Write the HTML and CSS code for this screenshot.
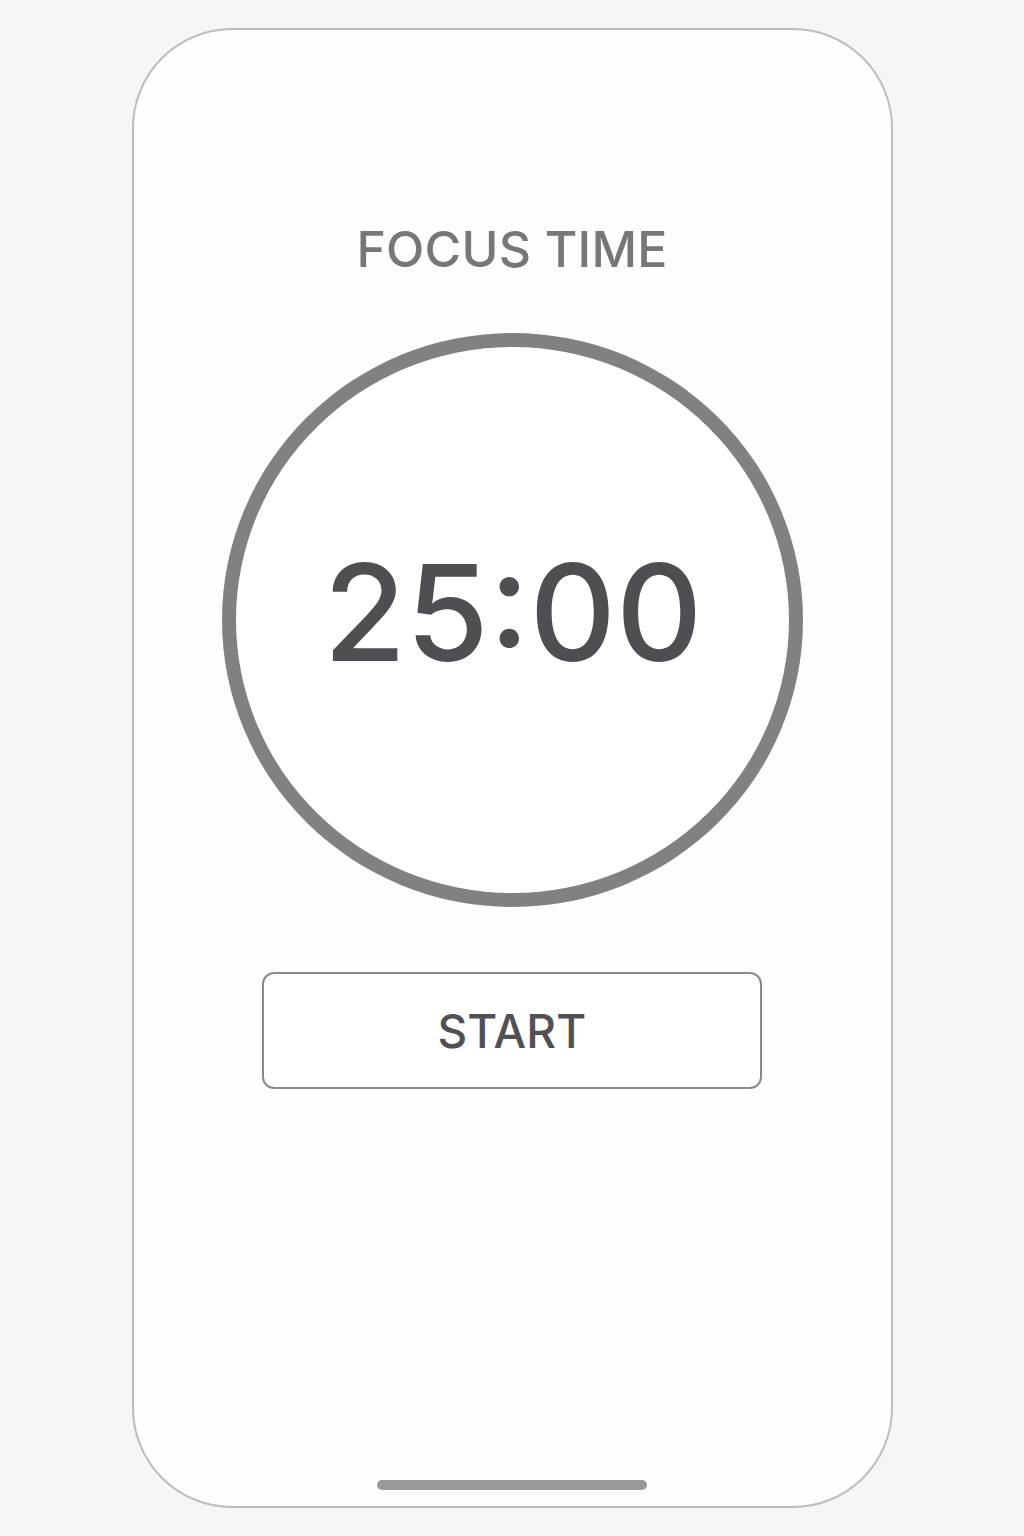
FILE: index.html
```html
<!DOCTYPE html>
<html lang="en">
<head>
    <meta charset="UTF-8">
    <meta name="viewport" content="width=device-width, initial-scale=1.0">
    <title>Focus Timer</title>

    <link rel="stylesheet" href="styles.css">
</head>
<body>
    <div class="phone">
        <h1 class="title">FOCUS TIME</h1>

        <div class="dial">
            <span class="time">25:00</span>
        </div>

        <button class="start-button">START</button>

        <div class="home-bar"></div>
    </div>
</body>
</html>
```

FILE: styles.css
```css
/* Page */
body {
    font-family: Inter, "Noto Sans", sans-serif;
    background-color: #f6f6f6;
    margin: 0;
    padding: 0;
}

/* Phone frame */
.phone {
    box-sizing: border-box;
    width: 761px;
    height: 1480px;
    margin: 28px auto 0;
    padding: 194px 0 16px;
    background-color: #fdfdfd;
    border: 2px solid #bdbdbd;
    border-radius: 100px;
    display: flex;
    flex-direction: column;
    align-items: center;
}

/* Heading */
.title {
    margin: 0;
    font-size: 50px;
    line-height: 1;
    font-weight: 500;
    color: #77777a;
    letter-spacing: 0.2px;
}

/* Timer circle */
.dial {
    box-sizing: border-box;
    width: 581px;
    height: 574px;
    margin-top: 59px;
    padding-bottom: 17px;
    background-color: #fff;
    border: 14px solid #818181;
    border-radius: 50%;
    display: flex;
    justify-content: center;
    align-items: center;
}

.time {
    font-size: 134px;
    line-height: 1;
    font-weight: 500;
    color: #4e4e53;
    padding-left: 2px;
}

/* Button */
.start-button {
    box-sizing: border-box;
    width: 500px;
    height: 117px;
    margin-top: 65px;
    background-color: #fff;
    border: 2px solid #8a8a8a;
    border-radius: 12px;
    font-family: inherit;
    font-size: 46px;
    font-weight: 500;
    color: #505055;
    letter-spacing: 0.2px;
    cursor: pointer;
}

/* Home indicator */
.home-bar {
    width: 270px;
    height: 10px;
    margin-top: auto;
    background-color: #9a9a9a;
    border-radius: 5px;
}
```
